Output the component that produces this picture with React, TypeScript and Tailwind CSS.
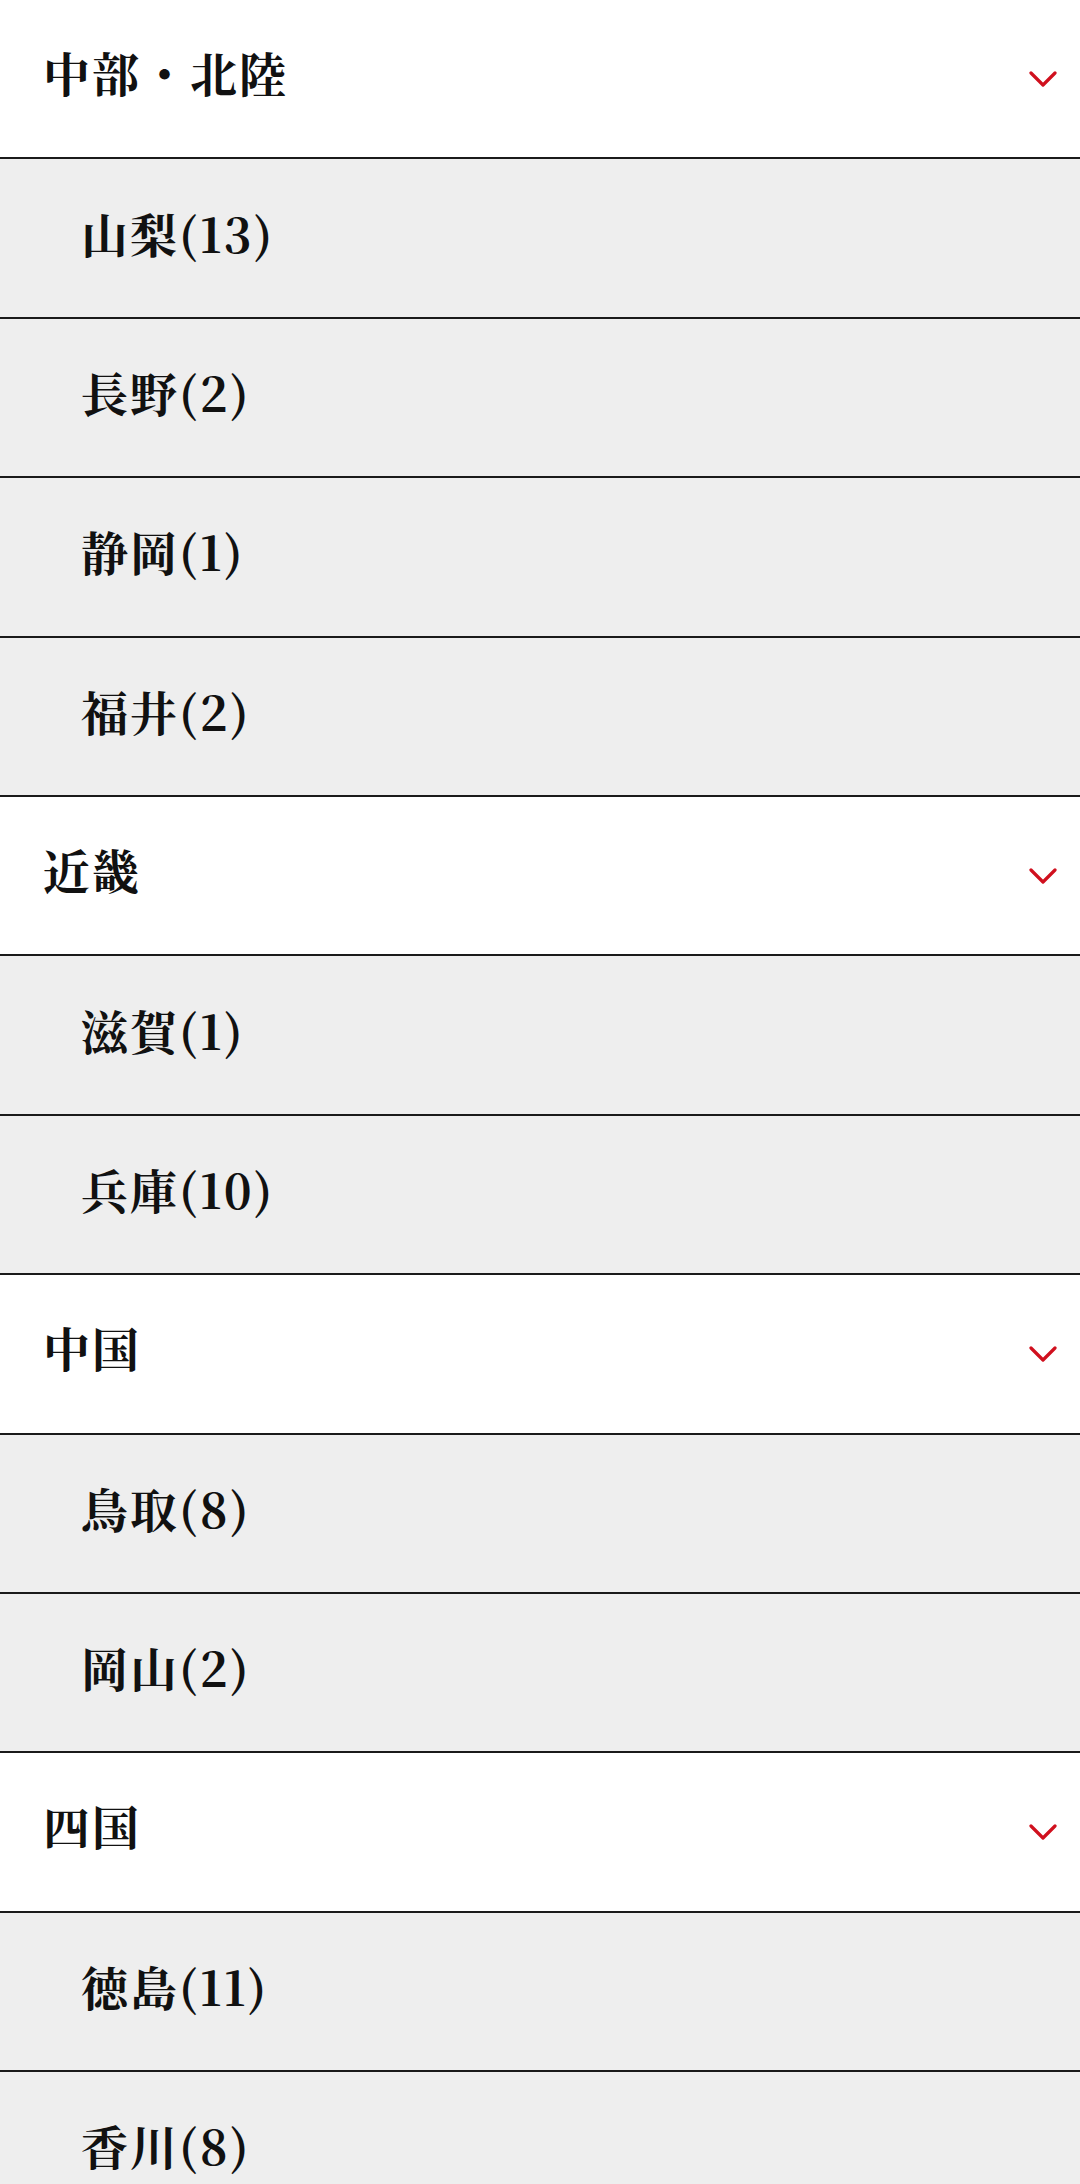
import React from "react";

type Region = { name: string; items: string[] };

const REGIONS: Region[] = [
  { name: "中部・北陸", items: ["山梨(13)", "長野(2)", "静岡(1)", "福井(2)"] },
  { name: "近畿", items: ["滋賀(1)", "兵庫(10)"] },
  { name: "中国", items: ["鳥取(8)", "岡山(2)"] },
  { name: "四国", items: ["徳島(11)", "香川(8)"] },
];

const fontStack = {
  fontFamily: '"Noto Serif CJK JP", "Liberation Serif", "Noto Sans CJK JP", serif',
};

function Chevron() {
  return (
    <svg width="28" height="18" viewBox="0 0 28 18" fill="none" className="shrink-0">
      <path d="M2 3 L14 15 L26 3" stroke="#d0101e" strokeWidth="3.2" strokeLinecap="round" strokeLinejoin="round" />
    </svg>
  );
}

export default function App() {
  return (
    <div className="w-[1080px] bg-white text-[#111]" style={fontStack}>
      {REGIONS.map((region) => (
        <div key={region.name}>
          {/* region header */}
          <div className="flex h-[159.4px] items-center justify-between border-b-2 border-[#1a1a1a] bg-white pl-[43px] pr-[23px]">
            <span className="pb-[14px] text-[47px] font-bold leading-none tracking-[2px]">{region.name}</span>
            <Chevron />
          </div>
          {/* prefectures */}
          {region.items.map((item) => (
            <div
              key={item}
              className="flex h-[159.4px] items-center border-b-2 border-[#1a1a1a] bg-[#eeeeee] pl-[81px]"
            >
              <span className="pb-[12px] text-[47px] font-bold leading-none tracking-[2px]">{item}</span>
            </div>
          ))}
        </div>
      ))}
    </div>
  );
}
